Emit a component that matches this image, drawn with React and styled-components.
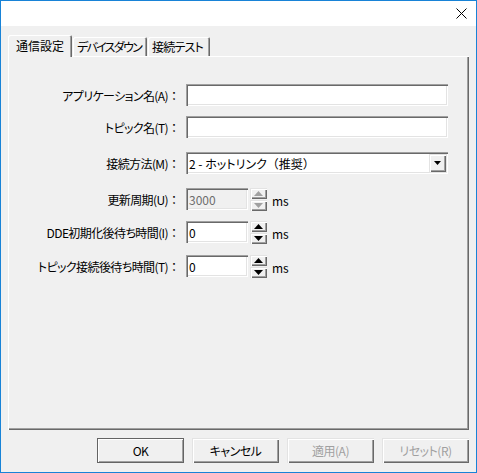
import styled, { createGlobalStyle, css } from "styled-components";

const GlobalStyle = createGlobalStyle`
  html, body {
    margin: 0;
    padding: 0;
    background: #ffffff;
  }
  body {
    font-family: "Noto Sans CJK JP", "Noto Sans", sans-serif;
    font-size: 12px;
    font-feature-settings: "palt";
    color: #000;
  }
  * {
    box-sizing: border-box;
  }
`;

const sunken = css`
  box-shadow: inset 1px 1px 0 #a0a0a0, inset 2px 2px 0 #696969,
    inset -1px -1px 0 #ffffff, inset -2px -2px 0 #e3e3e3;
`;

const raised = css`
  box-shadow: inset 1px 1px 0 #e3e3e3, inset 2px 2px 0 #ffffff,
    inset -1px -1px 0 #696969, inset -2px -2px 0 #a0a0a0;
`;

const Window = styled.div`
  width: 477px;
  height: 473px;
  border: 1px solid #1883d7;
  display: flex;
  flex-direction: column;
  background: #f0f0f0;
`;

const TitleBar = styled.div`
  height: 25px;
  background: #ffffff;
  display: flex;
  justify-content: flex-end;
  align-items: flex-start;
  padding: 7px 9px 0 0;
`;

const Body = styled.div`
  flex: 1;
  display: flex;
  flex-direction: column;
  padding: 9px 7px 9px 7px;
`;

const TabStrip = styled.div`
  height: 21px;
  display: flex;
  align-items: flex-end;
  position: relative;
  z-index: 1;
`;

const Tab = styled.div`
  height: ${({ $active }) => ($active ? "22px" : "19px")};
  margin-bottom: ${({ $active }) => ($active ? "-1px" : "0")};
  width: ${({ $w }) => $w}px;
  margin-left: ${({ $first }) => ($first ? "0" : "1px")};
  padding-left: ${({ $active }) => ($active ? "8px" : "4px")};
  padding-top: ${({ $active }) => ($active ? "0" : "1px")};
  letter-spacing: ${({ $ls }) => $ls || 0}px;
  background: #f0f0f0;
  display: flex;
  align-items: center;
  white-space: nowrap;
  overflow: hidden;
  border-top-left-radius: 2px;
  border-top-right-radius: 2px;
  box-shadow: inset 1px 1px 0 #ffffff, inset -1px 0 0 #696969,
    inset -2px 0 0 #a0a0a0;
  line-height: 1;
`;

const Panel = styled.div`
  height: 374px;
  box-shadow: inset 1px 1px 0 #ffffff, inset -1px -1px 0 #696969,
    inset -2px -2px 0 #a0a0a0;
  padding-top: 28px;
  display: flex;
  flex-direction: column;
`;

const Row = styled.div`
  display: flex;
  align-items: center;
  height: 22px;
  margin-top: ${({ $mt }) => $mt || 0}px;
`;

const Label = styled.div`
  width: 172px;
  text-align: right;
  white-space: nowrap;
  margin-right: 6px;
  letter-spacing: -0.6px;
`;

const Wide = styled.span`
  font-feature-settings: normal;
  letter-spacing: 0;
`;

const TextField = styled.div`
  ${sunken};
  width: ${({ $w }) => $w}px;
  height: 22px;
  background: ${({ $disabled }) => ($disabled ? "#f0f0f0" : "#ffffff")};
  color: ${({ $disabled }) => ($disabled ? "#6d6d6d" : "#000")};
  display: flex;
  align-items: center;
  padding: 1px 3px 0 3px;
  white-space: nowrap;
`;

const Combo = styled(TextField)`
  justify-content: space-between;
  padding-right: 2px;
`;

const DropButton = styled.div`
  ${raised};
  width: 17px;
  height: 18px;
  background: #f0f0f0;
  display: flex;
  align-items: center;
  justify-content: center;
  margin-top: -1px;
`;

const SpinGroup = styled.div`
  display: flex;
  flex-direction: column;
  justify-content: space-between;
  height: 23px;
  margin-left: 2px;
`;

const SpinButton = styled.div`
  ${raised};
  width: 17px;
  height: 11px;
  background: #f0f0f0;
  display: flex;
  align-items: center;
  justify-content: center;
`;

const Unit = styled.span`
  margin-left: 5px;
  margin-top: 2px;
`;

const ButtonBar = styled.div`
  display: flex;
  justify-content: flex-end;
  gap: 8px;
  margin-top: 8px;
`;

const Button = styled.div`
  ${raised};
  width: 87px;
  height: 25px;
  background: #f0f0f0;
  display: flex;
  align-items: center;
  justify-content: center;
  letter-spacing: -0.5px;
  color: ${({ $disabled }) => ($disabled ? "#a0a0a0" : "#000")};
  ${({ $default }) =>
    $default &&
    css`
      box-shadow: inset 0 0 0 1px #646464, inset 2px 2px 0 #ffffff,
        inset -2px -2px 0 #a0a0a0;
    `}
`;

const Triangle = ({ up, color = "#000", w = 7 }) => {
  const h = Math.ceil(w / 2);
  return (
    <svg width={w} height={h} viewBox={`0 0 ${w} ${h}`}>
      {up ? (
        <polygon points={`0,${h} ${w},${h} ${w / 2},0`} fill={color} />
      ) : (
        <polygon points={`0,0 ${w},0 ${w / 2},${h}`} fill={color} />
      )}
    </svg>
  );
};

const CloseIcon = () => (
  <svg width="11" height="11" viewBox="0 0 11 11">
    <path d="M0.5 0.5 L10.5 10.5 M10.5 0.5 L0.5 10.5" stroke="#000" strokeWidth="1" />
  </svg>
);

const Spinner = ({ value, disabled }) => {
  const c = disabled ? "#a0a0a0" : "#000";
  return (
    <>
      <TextField $w={62} $disabled={disabled}>
        {value}
      </TextField>
      <SpinGroup>
        <SpinButton>
          <Triangle up color={c} w={9} />
        </SpinButton>
        <SpinButton>
          <Triangle color={c} w={9} />
        </SpinButton>
      </SpinGroup>
      <Unit>ms</Unit>
    </>
  );
};

const fields = [
  { label: "更新周期(U)", value: "3000", disabled: true, mt: 14 },
  { label: "DDE初期化後待ち時間(I)", value: "0", mt: 11 },
  { label: "トピック接続後待ち時間(T)", value: "0", mt: 12 },
];

export default function App() {
  return (
    <>
      <GlobalStyle />
      <Window>
        <TitleBar>
          <CloseIcon />
        </TitleBar>
        <Body>
          <TabStrip>
            <Tab $active $first $w={64}>
              通信設定
            </Tab>
            <Tab $w={74} $ls={-1.7}>
              デバイスダウン
            </Tab>
            <Tab $w={62} $ls={-0.8}>
              接続テスト
            </Tab>
          </TabStrip>
          <Panel>
            <Row>
              <Label>
                アプリケーション名(A)<Wide>：</Wide>
              </Label>
              <TextField $w={262} />
            </Row>
            <Row $mt={10}>
              <Label>
                トピック名(T)<Wide>：</Wide>
              </Label>
              <TextField $w={262} />
            </Row>
            <Row $mt={14}>
              <Label>
                接続方法(M)<Wide>：</Wide>
              </Label>
              <Combo $w={262}>
                <span>
                  2 - ホットリンク<Wide>（推奨）</Wide>
                </span>
                <DropButton>
                  <Triangle w={7} />
                </DropButton>
              </Combo>
            </Row>
            {fields.map((f) => (
              <Row key={f.label} $mt={f.mt}>
                <Label>
                  {f.label}
                  <Wide>：</Wide>
                </Label>
                <Spinner value={f.value} disabled={f.disabled} />
              </Row>
            ))}
          </Panel>
          <ButtonBar>
            <Button $default>OK</Button>
            <Button>キャンセル</Button>
            <Button $disabled>適用(A)</Button>
            <Button $disabled>リセット(R)</Button>
          </ButtonBar>
        </Body>
      </Window>
    </>
  );
}
